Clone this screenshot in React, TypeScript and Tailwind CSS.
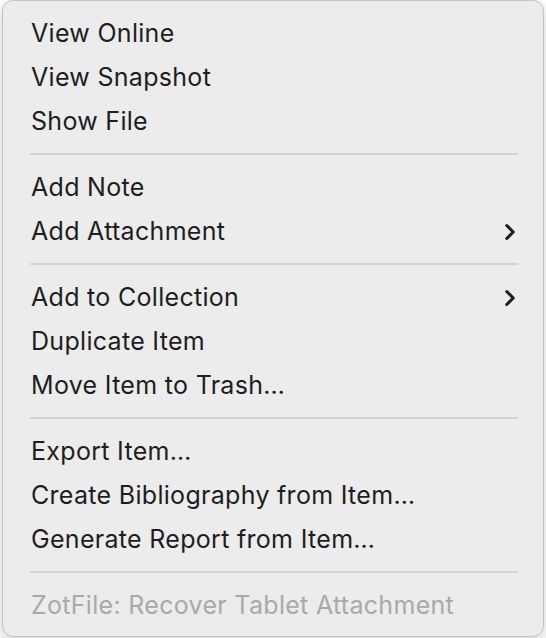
import { ChevronRight } from "lucide-react";

type MenuEntry =
  | { kind: "item"; label: string; submenu?: boolean; disabled?: boolean }
  | { kind: "sep" };

const entries: MenuEntry[] = [
  { kind: "item", label: "View Online" },
  { kind: "item", label: "View Snapshot" },
  { kind: "item", label: "Show File" },
  { kind: "sep" },
  { kind: "item", label: "Add Note" },
  { kind: "item", label: "Add Attachment", submenu: true },
  { kind: "sep" },
  { kind: "item", label: "Add to Collection", submenu: true },
  { kind: "item", label: "Duplicate Item" },
  { kind: "item", label: "Move Item to Trash…" },
  { kind: "sep" },
  { kind: "item", label: "Export Item…" },
  { kind: "item", label: "Create Bibliography from Item…" },
  { kind: "item", label: "Generate Report from Item…" },
  { kind: "sep" },
  { kind: "item", label: "ZotFile: Recover Tablet Attachment", disabled: true },
];

export default function App() {
  return (
    <div className="h-[638px] w-[546px] overflow-hidden bg-white font-['Inter',sans-serif]">
      <div className="ml-[2px] w-[542px] rounded-[11px] border border-[#c4c4c4] bg-[#ececec] pb-[8px] pt-[11px] shadow-[0_4px_14px_rgba(0,0,0,0.18)]">
        {entries.map((entry, i) =>
          entry.kind === "sep" ? (
            <div key={i} className="h-[22px] pl-[27px] pr-[25px] pt-[9px]">
              <div className="h-[2px] w-full bg-[#d3d3d3]" />
            </div>
          ) : (
            <div
              key={i}
              className={`flex h-[44px] items-center justify-between pl-[28px] pr-[20px] text-[25px] tracking-[0.3px] ${
                entry.disabled ? "text-[#a9a9a9]" : "text-[#1e1e1e]"
              }`}
            >
              <span>{entry.label}</span>
              {entry.submenu && (
                <ChevronRight size={26} strokeWidth={2.8} className="text-[#1e1e1e]" />
              )}
            </div>
          )
        )}
      </div>
    </div>
  );
}
